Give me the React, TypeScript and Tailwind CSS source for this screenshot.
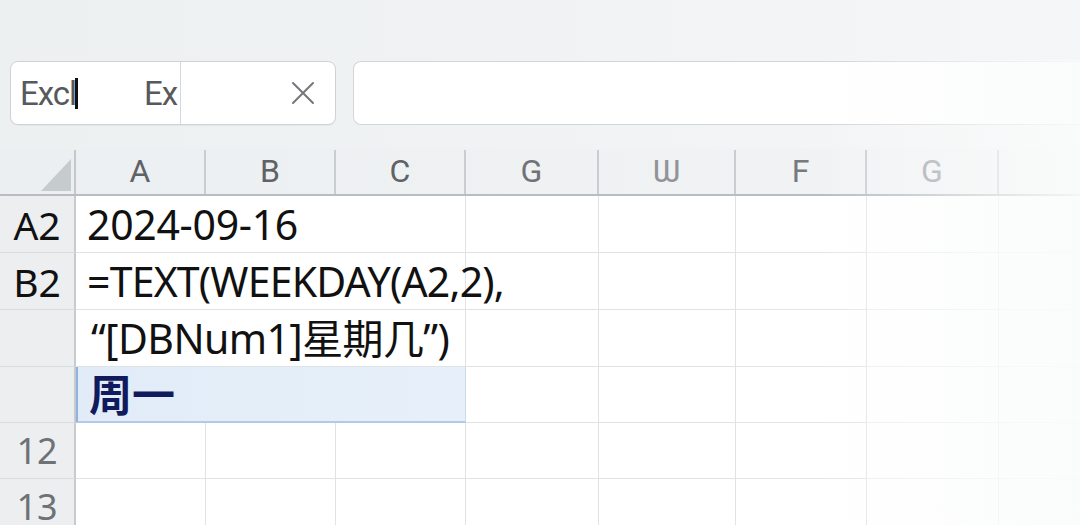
import React from "react";

const COLS = [
  { label: "A", w: 130, c: "text-[#5f6266]" },
  { label: "B", w: 130, c: "text-[#5f6266]" },
  { label: "C", w: 130, c: "text-[#5f6266]" },
  { label: "G", w: 133, c: "text-[#6f7377]" },
  { label: "Ѡ", w: 137, c: "text-[#909498]" },
  { label: "F", w: 131, c: "text-[#76797d]" },
  { label: "G", w: 132, c: "text-[#9a9ea2]" },
];

function RowHeader({ label, dark, h }: { label: string; dark?: boolean; h: string }) {
  return (
    <div
      className={`w-[76px] shrink-0 ${h} bg-[#eceef0] border-b border-[#d9dcdf] border-r-2 border-r-[#c7cbcf] flex items-center justify-center ${
        dark ? "text-[#111] text-[39px]" : "text-[#6e7175] text-[36px]"
      } leading-none`}
      style={{ fontFamily: '"Noto Sans", sans-serif' }}
    >
      {label}
    </div>
  );
}

function EmptyCells({ merged, h }: { merged?: boolean; h: string }) {
  return (
    <>
      {!merged && (
        <>
          <div className={`w-[130px] shrink-0 ${h} border-b border-r border-[#e0e3e6] bg-white`} />
          <div className={`w-[130px] shrink-0 ${h} border-b border-r border-[#e0e3e6] bg-white`} />
          <div className={`w-[130px] shrink-0 ${h} border-b border-r border-[#e0e3e6] bg-white`} />
        </>
      )}
      <div className={`w-[133px] shrink-0 ${h} border-b border-r border-[#e0e3e6] bg-white`} />
      <div className={`w-[137px] shrink-0 ${h} border-b border-r border-[#e0e3e6] bg-white`} />
      <div className={`w-[131px] shrink-0 ${h} border-b border-r border-[#e3e6e8] bg-white`} />
      <div className={`w-[132px] shrink-0 ${h} border-b border-r border-[#eceef0] bg-white`} />
      <div className={`flex-1 ${h} border-b border-[#f0f1f2] bg-white`} />
    </>
  );
}

export default function App() {
  const sans = { fontFamily: '"Noto Sans", "Noto Sans CJK SC", sans-serif' };
  return (
    <div className="w-[1080px] h-[525px] overflow-hidden bg-gradient-to-r from-[#edf0f1] to-[#f4f6f7] relative">
      {/* top bar */}
      <div className="h-[148px] pt-[61px] px-[10px] flex gap-[17px]">
        <div className="w-[326px] h-[64px] bg-white rounded-[8px] border border-[#cfd3d6] flex shadow-[0_1px_1px_rgba(0,0,0,0.04)]">
          <div className="w-[170px] border-r border-[#d6d9dc] flex items-center pl-[9px] text-[#57595c] text-[33px] leading-none tracking-[-1px]" style={{ fontFamily: '"Roboto", sans-serif' }}>
            <span>Excl</span>
            <span className="w-[3px] h-[31px] bg-[#111] ml-[-1px]" />
            <span className="ml-[66px]">Ex</span>
          </div>
          <div className="flex-1 flex items-center justify-end pr-[20px]">
            <svg width="24" height="24" viewBox="0 0 24 24" fill="none" stroke="#74777b" strokeWidth="2" strokeLinecap="round">
              <path d="M2 2 L22 22 M22 2 L2 22" />
            </svg>
          </div>
        </div>
        <div className="flex-1 h-[64px] bg-white rounded-l-[8px] border border-r-0 border-[#d3d6d9] mr-[-10px]" />
      </div>

      {/* column header */}
      <div className="flex h-[48px] border-b-2 border-[#b9bdc1] bg-gradient-to-r from-[#eceff1] to-[#f2f4f5]">
        <div className="w-[76px] shrink-0 relative border-r-2 border-[#c4c8cc] mt-[2px]">
          <svg className="absolute left-[41px] top-[9px]" width="30" height="32" viewBox="0 0 30 32">
            <polygon points="30,0 30,32 0,32" fill="#c6cbce" />
          </svg>
        </div>
        {COLS.map((c, i) => (
          <div
            key={i}
            style={{ width: c.w, fontFamily: '"Roboto", sans-serif' }}
            className={`shrink-0 flex items-center justify-center border-r-2 border-[#c9cdd1] mt-[2px] pb-[2px] text-[32px] leading-none ${c.c}`}
          >
            {c.label}
          </div>
        ))}
        <div className="flex-1" />
      </div>

      {/* body */}
      <div style={sans}>
        <div className="flex">
          <RowHeader label="A2" dark h="h-[57px]" />
          <div className="w-[390px] shrink-0 h-[57px] border-b border-r border-[#e0e3e6] bg-white flex items-center pl-[11px] text-[41px] text-[#111] leading-none tracking-[-0.3px]">
            2024-09-16
          </div>
          <EmptyCells merged h="h-[57px]" />
        </div>
        <div className="flex">
          <RowHeader label="B2" dark h="h-[57px]" />
          <div className="relative z-10 w-[390px] shrink-0 h-[57px] border-b border-r border-[#e0e3e6] bg-white flex items-center pl-[11px] text-[41px] text-[#111] leading-none whitespace-nowrap tracking-[-0.8px]">
            =TEXT(WEEKDAY(A2,2),
          </div>
          <EmptyCells merged h="h-[57px]" />
        </div>
        <div className="flex">
          <RowHeader label="" h="h-[57px]" />
          <div className="w-[390px] shrink-0 h-[57px] border-b border-r border-[#e0e3e6] bg-white flex items-center pl-[15px] text-[41px] text-[#111] leading-none whitespace-nowrap tracking-[-0.6px]">
            “[DBNum1]星期几”)
          </div>
          <EmptyCells merged h="h-[57px]" />
        </div>
        <div className="flex">
          <RowHeader label="" h="h-[56px]" />
          <div className="w-[390px] shrink-0 h-[56px] border-l-2 border-l-[#8fb4dc] border-b-2 border-b-[#b0cbe6] border-r border-r-[#c9d9ea] bg-gradient-to-r from-[#e1ecf8] to-[#e7f0fa] flex items-center pl-[11px] text-[43px] font-bold text-[#101a5c] leading-none">
            周一
          </div>
          <EmptyCells merged h="h-[56px]" />
        </div>
        <div className="flex">
          <RowHeader label="12" h="h-[56px]" />
          <EmptyCells h="h-[56px]" />
        </div>
        <div className="flex">
          <RowHeader label="13" h="h-[56px]" />
          <EmptyCells h="h-[56px]" />
        </div>
      </div>

      {/* right side fade */}
      <div className="absolute right-0 top-[60px] bottom-0 w-[260px] bg-gradient-to-r from-transparent to-[#fafbfb]/90 pointer-events-none" />
    </div>
  );
}
